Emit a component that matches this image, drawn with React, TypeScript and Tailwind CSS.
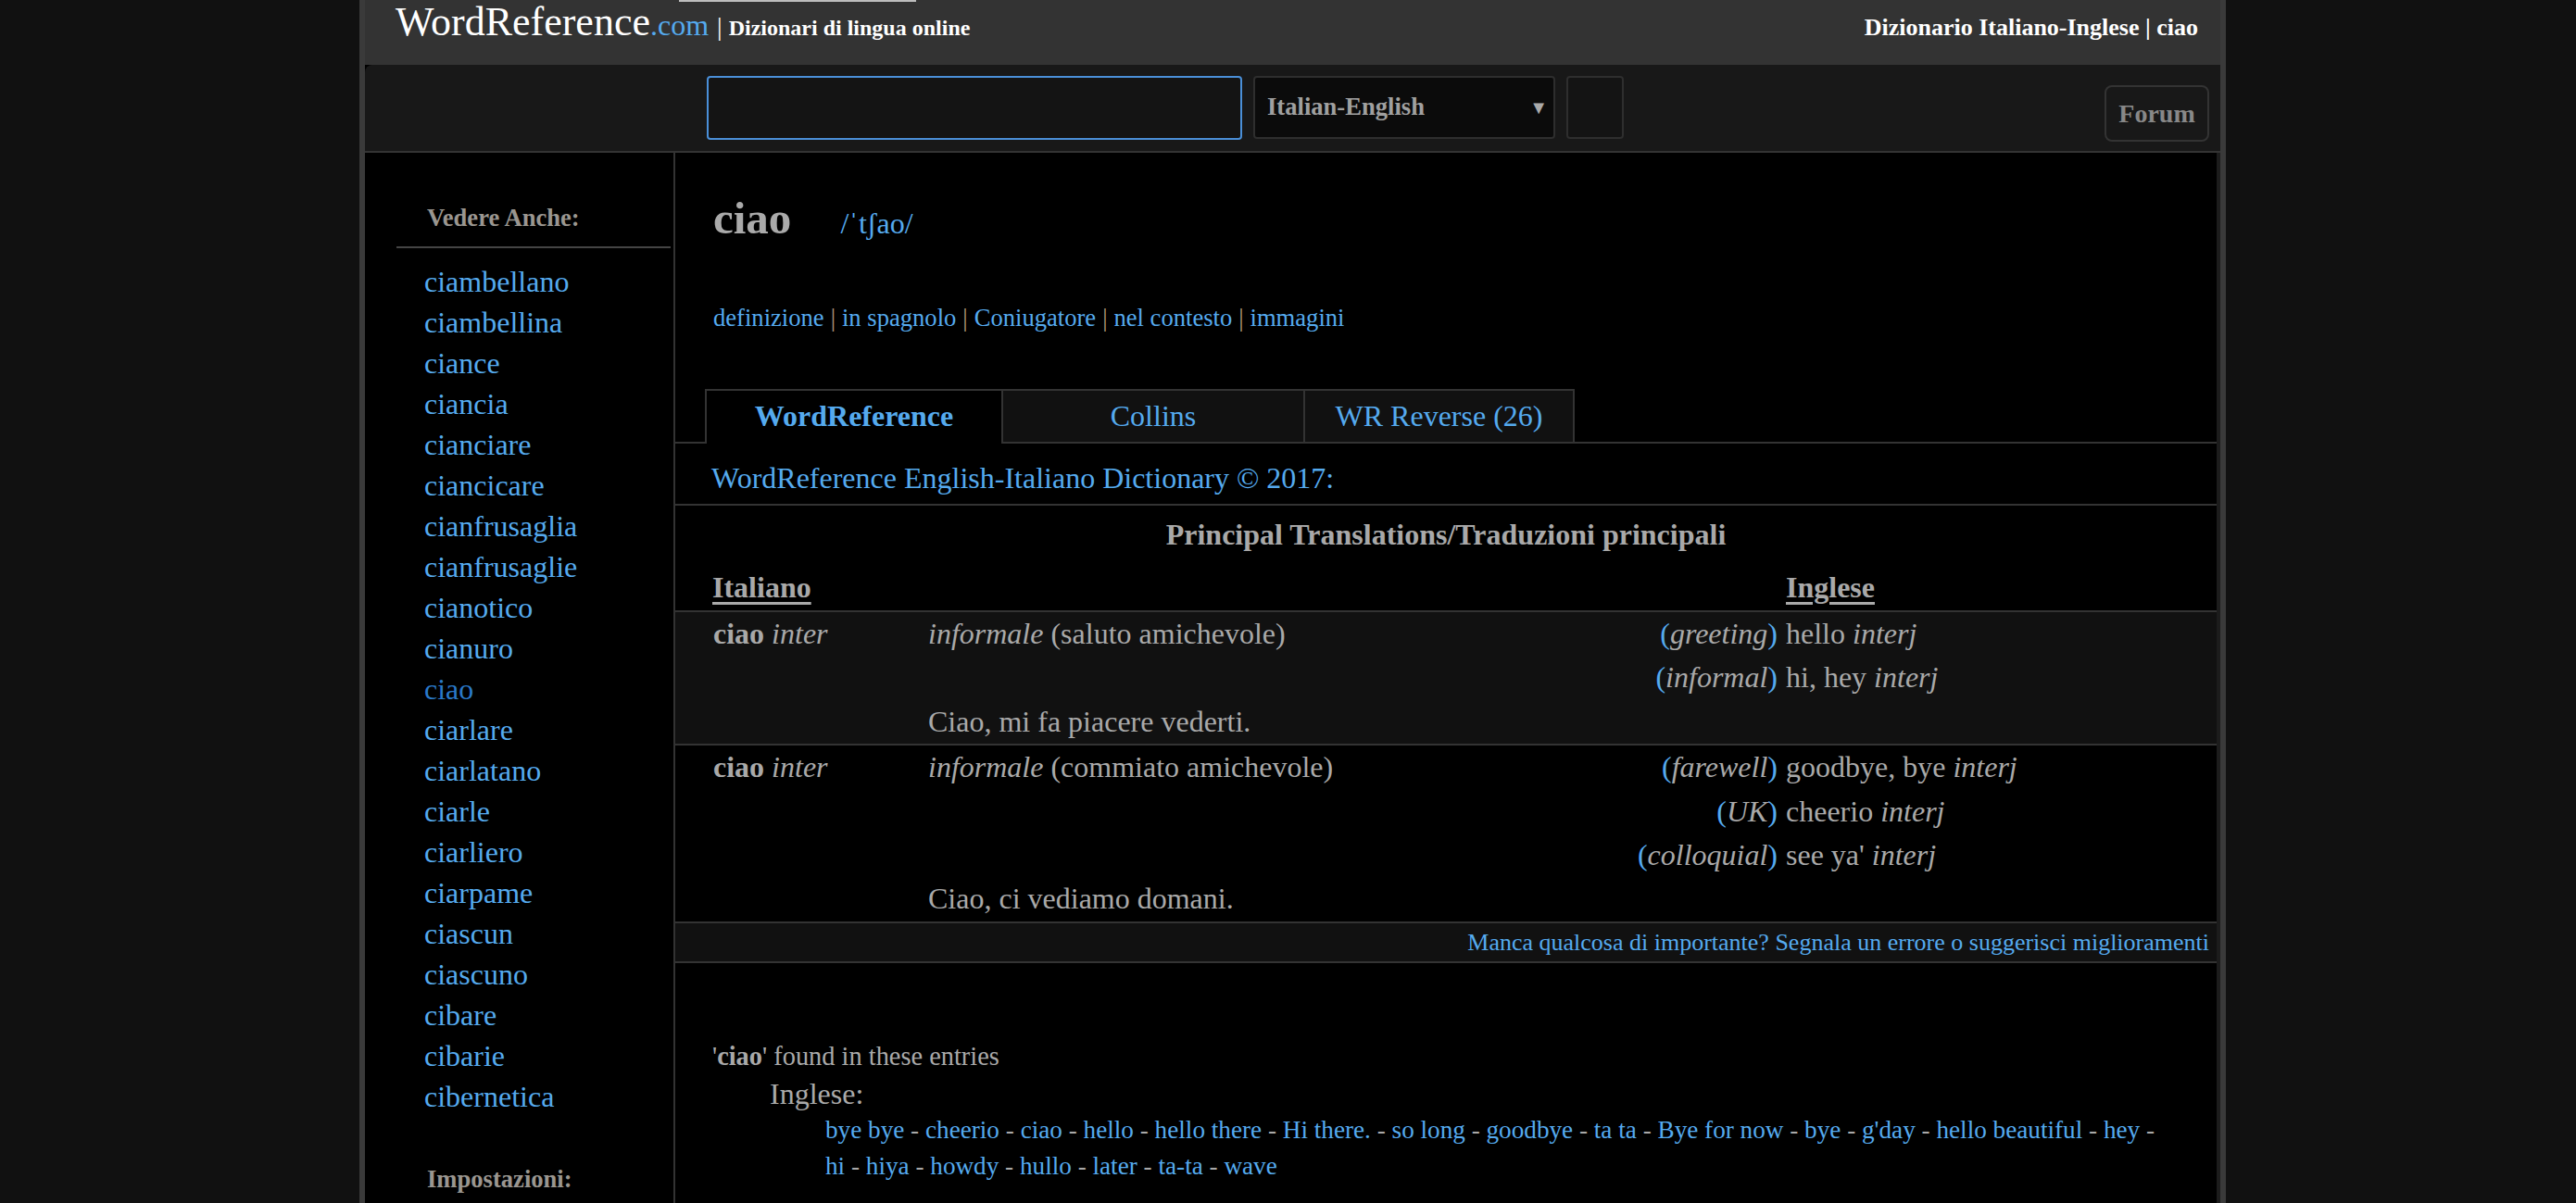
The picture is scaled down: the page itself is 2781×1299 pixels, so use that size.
import React from "react";

const sidebarLinks = [
  "ciambellano","ciambellina","ciance","ciancia","cianciare","ciancicare","cianfrusaglia","cianfrusaglie","cianotico","cianuro","ciao","ciarlare","ciarlatano","ciarle","ciarliero","ciarpame","ciascun","ciascuno","cibare","cibarie","cibernetica",
];

const found = [
  "bye bye","cheerio","ciao","hello","hello there","Hi there.","so long","goodbye","ta ta","Bye for now","bye","g'day","hello beautiful","hey","hi","hiya","howdy","hullo","later","ta-ta","wave",
];

function Sep() {
  return <span className="mx-[7px] text-[#b39b7d]">|</span>;
}

function Ctx({ children }: { children: React.ReactNode }) {
  return (
    <span>
      <span className="text-[#55aaee]">(</span>
      <i>{children}</i>
      <span className="text-[#55aaee]">)</span>
    </span>
  );
}

function Line({ a, b, ctx, c }: { a?: React.ReactNode; b?: React.ReactNode; ctx?: React.ReactNode; c?: React.ReactNode }) {
  return (
    <div className="flex h-[47.4px] leading-[47.4px] whitespace-nowrap">
      <div className="w-[266px] pl-[41px]">{a}</div>
      <div className="flex w-[927px] justify-between pl-[7px] pr-[3px]">
        <span>{b}</span>
        <span>{ctx}</span>
      </div>
      <div className="flex-1 pl-[6px]">{c}</div>
    </div>
  );
}

export default function App() {
  return (
    <div className="min-h-screen bg-[#111111] font-['Liberation_Serif',serif] text-[#a9a9a9]">
      <div className="relative ml-[388px] flex min-h-[1299px] w-[2015px] flex-col border-x-[6px] border-[#3a3a3a] bg-black">
        <div className="absolute left-[339px] top-0 h-[2px] w-[256px] bg-[#bdbdbd]" />
        <header className="flex h-[70px] items-baseline bg-[#333333] pl-[33px] pr-[24px] pt-[2px]">
          <span className="text-[44px] leading-none text-white">WordReference</span>
          <span className="text-[32px] leading-none text-[#55aaee]">.com</span>
          <span className="ml-[9px] mr-[7px] text-[28px] leading-none text-white">|</span>
          <span className="text-[24px] font-bold leading-none text-white">Dizionari di lingua online</span>
          <span className="ml-auto text-[26px] font-bold leading-none text-white">
            Dizionario Italiano-Inglese | ciao
          </span>
        </header>

        <div className="flex h-[95px] items-start rounded-tl-[8px] border-b-2 border-[#333333] bg-[#181818] pl-[369px] pr-[12px] pt-[12px]">
          <div className="h-[69px] w-[578px] rounded-[4px] border-2 border-[#4a8fd8] bg-[#141414]" />
          <div className="ml-[12px] flex h-[68px] w-[326px] items-center justify-between rounded-[4px] border-2 border-[#2e2e2e] bg-[#0b0b0b] pl-[13px] pr-[6px] text-[26.6px] font-bold text-[#a0a0a0]">
            <span>Italian-English</span>
            <span className="text-[20px] text-[#aaaaaa]">▼</span>
          </div>
          <div className="ml-[12px] h-[68px] w-[62px] rounded-[4px] border-2 border-[#2e2e2e] bg-[#141414]" />
          <div className="ml-auto mt-[10px] flex h-[61px] w-[113px] items-center justify-center rounded-[8px] border-2 border-[#333333] text-[28px] font-bold text-[#888888]">
            Forum
          </div>
        </div>

        <div className="flex flex-1">
          <aside className="w-[335px] border-r-2 border-[#333333] pl-[34px] pr-[3px]">
            <div className="mt-[52px] border-b-2 border-[#444444] pb-[13px] pl-[33px] text-[26.6px] font-bold leading-[36px] text-[#9a9690]">
              Vedere Anche:
            </div>
            <ul className="mt-[14px] pl-[30px] text-[32px] leading-[44px]">
              {sidebarLinks.map((w) => (
                <li key={w} className={w === "ciao" ? "text-[#2a79c9]" : "text-[#55aaee]"}>
                  {w}
                </li>
              ))}
            </ul>
            <div className="mt-[49px] pl-[33px] text-[26.6px] font-bold leading-[36px] text-[#9a9690]">
              Impostazioni:
            </div>
          </aside>

          <main className="flex-1 border-r-[4px] border-[#1c1c1c] pt-[41px]">
            <div className="flex h-[60px] items-baseline pl-[41px] leading-[60px]">
              <h1 className="text-[49px] font-bold text-[#aaaaaa]">ciao</h1>
              <span className="ml-[53px] text-[32px] text-[#55aaee]">/ˈtʃao/</span>
            </div>

            <div className="mt-[57px] pl-[41px] text-[26.6px] leading-[40px] text-[#55aaee]">
              <span>definizione</span>
              <Sep />
              <span>in spagnolo</span>
              <Sep />
              <span>Coniugatore</span>
              <Sep />
              <span>nel contesto</span>
              <Sep />
              <span>immagini</span>
            </div>

            <div className="mt-[57px] flex items-start border-b-2 border-[#333333] pl-[32px] text-[32px] text-[#55aaee]">
              <div className="mb-[-2px] h-[59px] w-[322px] border-2 border-b-0 border-[#333333] bg-black text-center font-bold leading-[55px]">
                WordReference
              </div>
              <div className="h-[57px] w-[326px] border-r-2 border-t-2 border-[#333333] bg-[#111111] text-center leading-[55px]">
                Collins
              </div>
              <div className="h-[57px] w-[291px] border-r-2 border-t-2 border-[#333333] bg-[#111111] text-center leading-[55px]">
                WR Reverse (26)
              </div>
            </div>

            <div className="border-b-2 border-[#333333] pl-[39px] pt-[9px] text-[32px] leading-[56px] text-[#55aaee]">
              WordReference English-Italiano Dictionary © 2017:
            </div>

            <div className="text-[32px]">
              <div className="pt-[5px] text-center font-bold leading-[52px] text-[#a9a9a9]">
                Principal Translations/Traduzioni principali
              </div>
              <div className="flex border-b-2 border-[#333333] pt-[6px] font-bold leading-[50px]">
                <div className="w-[1199px] pl-[40px]">
                  <span className="underline decoration-[3px] underline-offset-[5px]">Italiano</span>
                </div>
                <div className="flex-1">
                  <span className="underline decoration-[3px] underline-offset-[5px]">Inglese</span>
                </div>
              </div>

              <div className="border-b-2 border-[#333333] bg-[#111111]">
                <Line
                  a={<><b>ciao</b> <i>inter</i></>}
                  b={<><i>informale</i> (saluto amichevole)</>}
                  ctx={<Ctx>greeting</Ctx>}
                  c={<>hello <i>interj</i></>}
                />
                <Line ctx={<Ctx>informal</Ctx>} c={<>hi, hey <i>interj</i></>} />
                <Line b={<>Ciao, mi fa piacere vederti.</>} />
              </div>

              <div className="border-b-2 border-[#333333] bg-black">
                <Line
                  a={<><b>ciao</b> <i>inter</i></>}
                  b={<><i>informale</i> (commiato amichevole)</>}
                  ctx={<Ctx>farewell</Ctx>}
                  c={<>goodbye, bye <i>interj</i></>}
                />
                <Line ctx={<Ctx>UK</Ctx>} c={<>cheerio <i>interj</i></>} />
                <Line ctx={<Ctx>colloquial</Ctx>} c={<>see ya' <i>interj</i></>} />
                <Line b={<>Ciao, ci vediamo domani.</>} />
              </div>

              <div className="border-b-2 border-[#333333] bg-[#111111] pr-[8px] text-right text-[26px] leading-[41px] text-[#55aaee]">
                Manca qualcosa di importante? Segnala un errore o suggerisci miglioramenti
              </div>
            </div>

            <div className="mt-[81px] pl-[40px] pr-[50px]">
              <div className="text-[28.4px] leading-[40px]">
                '<b>ciao</b>' found in these entries
              </div>
              <div className="pl-[62px] text-[32px] leading-[40px]">Inglese:</div>
              <div className="pl-[122px] text-[27.2px] leading-[39.3px]">
                {found.map((w, i) => (
                  <React.Fragment key={w + i}>
                    <span className="text-[#55aaee]">{w}</span>
                    {i < found.length - 1 ? <span className="text-[#a9a9a9]"> - </span> : null}
                  </React.Fragment>
                ))}
              </div>
            </div>
          </main>
        </div>
      </div>
    </div>
  );
}
